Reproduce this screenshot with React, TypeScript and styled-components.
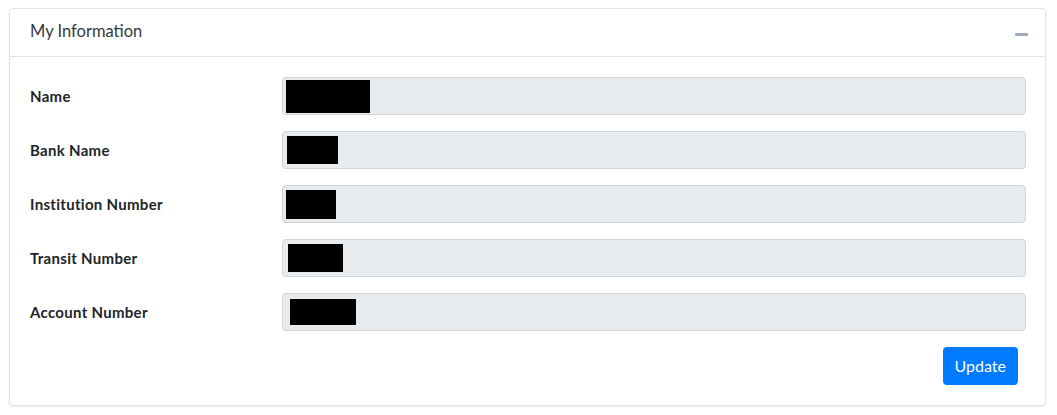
import React from 'react';
import styled, { createGlobalStyle } from 'styled-components';

const GlobalStyle = createGlobalStyle`
  body {
    margin: 0;
    background: #fff;
    font-family: "Source Sans Pro", Lato, "Liberation Sans", sans-serif;
  }
`;

const Page = styled.div`
  padding: 8px 11px 10px 9px;
`;

const Card = styled.section`
  border: 1px solid #e1e3e6;
  border-radius: 4px;
  box-shadow: 0 1px 2px rgba(0, 0, 0, 0.08);
  background: #fff;
`;

const Header = styled.header`
  display: flex;
  align-items: center;
  justify-content: space-between;
  height: 47px;
  padding: 0 17px 0 20px;
  border-bottom: 1px solid #dfe1e4;
`;

const Title = styled.h3`
  margin: 0 0 4px;
  font-size: 16.5px;
  font-weight: 400;
  color: #343a40;
`;

const Collapse = styled.button`
  width: 13px;
  height: 3px;
  padding: 0;
  border: 0;
  border-radius: 1px;
  margin-top: 4px;
  background: #a0acbd;
  cursor: pointer;
`;

const Body = styled.div`
  display: flex;
  flex-direction: column;
  padding: 20px 19px 20px 20px;
`;

const Fields = styled.div`
  display: flex;
  flex-direction: column;
  gap: 16px;
`;

const Row = styled.div`
  display: grid;
  grid-template-columns: 252px 1fr;
  align-items: center;
`;

const Label = styled.label`
  font-size: 15px;
  font-weight: 700;
  letter-spacing: 0.3px;
  color: #212529;
`;

const Field = styled.div`
  display: flex;
  align-items: center;
  height: 38px;
  box-sizing: border-box;
  border: 1px solid #ced4da;
  border-radius: 4px;
  background: #e9ecef;
`;

const Redacted = styled.span<{ $w: number; $h: number; $x: number }>`
  display: block;
  width: ${p => p.$w}px;
  height: ${p => p.$h}px;
  margin-left: ${p => p.$x}px;
  background: #000;
`;

const Actions = styled.div`
  display: flex;
  justify-content: flex-end;
  margin-top: 16px;
  padding-right: 8px;
`;

const Button = styled.button`
  height: 38px;
  padding: 0 12px 2px;
  border: 0;
  border-radius: 4px;
  background: #007bff;
  color: #fff;
  font-family: inherit;
  font-size: 16px;
  cursor: pointer;
`;

const fields = [
  { label: 'Name', w: 84, h: 33, x: 3 },
  { label: 'Bank Name', w: 51, h: 28, x: 4 },
  { label: 'Institution Number', w: 50, h: 29, x: 3 },
  { label: 'Transit Number', w: 55, h: 28, x: 5 },
  { label: 'Account Number', w: 66, h: 26, x: 7 },
];

export default function App() {
  return (
    <Page>
      <GlobalStyle />
      <Card>
        <Header>
          <Title>My Information</Title>
          <Collapse aria-label="Collapse" />
        </Header>
        <Body>
          <Fields>
            {fields.map(f => (
              <Row key={f.label}>
                <Label>{f.label}</Label>
                <Field>
                  <Redacted $w={f.w} $h={f.h} $x={f.x} />
                </Field>
              </Row>
            ))}
          </Fields>
          <Actions>
            <Button>Update</Button>
          </Actions>
        </Body>
      </Card>
    </Page>
  );
}
